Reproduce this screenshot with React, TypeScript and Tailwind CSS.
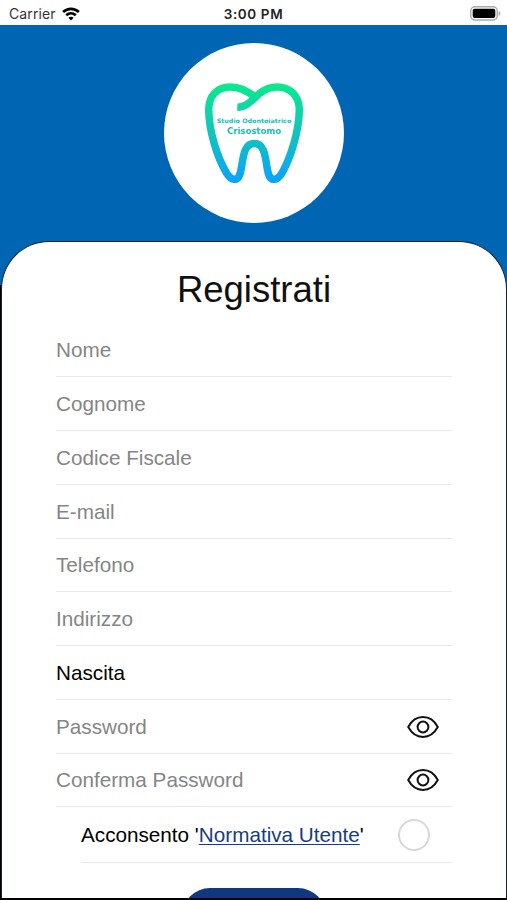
const fields = ["Nome", "Cognome", "Codice Fiscale", "E-mail", "Telefono", "Indirizzo"];

function StatusBar() {
  return (
    <div className="relative flex h-[25px] shrink-0 items-center justify-between bg-white pl-[9px] pr-[6px] pt-[2px] font-['Inter',sans-serif]">
      <div className="flex items-center gap-[6px]">
        <span className="text-[14px] leading-none tracking-[0.1px] text-[#333]">Carrier</span>
        <svg width="18" height="14" viewBox="0 0 18 14" fill="none" stroke="#000" strokeWidth="2.7">
          <path d="M1.1 5.1C5.6.8 12.4.8 16.9 5.1" />
          <path d="M4.2 8.3c2.8-2.6 6.8-2.6 9.6 0" />
          <path d="M9 13.4 6.4 10.8c1.5-1.3 3.7-1.3 5.2 0Z" fill="#000" stroke="none" />
        </svg>
      </div>
      <span className="absolute left-1/2 top-[7px] -translate-x-1/2 whitespace-nowrap text-[13.5px] font-semibold leading-[14px] tracking-[0.6px] text-[#222]">
        3:00 PM
      </span>
      <svg width="31" height="15" viewBox="0 0 31 15">
        <rect x=".8" y=".8" width="26.4" height="13.2" rx="4" fill="#fff" stroke="#aaa" strokeWidth="1.4" />
        <rect x="2.7" y="2.7" width="22.6" height="9.4" rx="2" fill="#000" />
        <path d="M28.6 5c2.4.8 2.4 4 0 4.8Z" fill="#aaa" />
      </svg>
    </div>
  );
}

function Logo() {
  return (
    <svg className="h-[180px] w-[180px] rounded-full bg-white" viewBox="0 0 180 180">
      <defs>
        <linearGradient id="tooth" gradientUnits="userSpaceOnUse" x1="0" y1="40" x2="0" y2="140">
          <stop offset="0" stopColor="#0aeb8c" />
          <stop offset=".5" stopColor="#12c4bc" />
          <stop offset="1" stopColor="#08a2ff" />
        </linearGradient>
      </defs>
      <path
        d="M73.3 64.2C83 64.5 89 56 96 50C101 46 106 43.9 113 43.9C127 43.9 135.4 54 135.3 67C135 88 127 114 118 130C113 138 107 138.5 104.5 131C101 119 102.5 100.5 90.3 100.5C78 100.5 79.5 119 76 131C73.5 138.5 67.5 138 62.5 130C53 114 45 88 44.7 67C44.6 53 53 43.9 66 43.9C76 43.9 82 48 91 53.5"
        fill="none"
        stroke="url(#tooth)"
        strokeWidth="7.5"
      />
      <g fill="#1cbcb5" fontFamily="DejaVu Sans" fontWeight="700" textAnchor="middle">
        <text x="90" y="79.5" fontSize="6" textLength="74.5" lengthAdjust="spacingAndGlyphs">
          Studio Odontoiatrico
        </text>
        <text x="90" y="90.5" fontSize="8.7" textLength="54" lengthAdjust="spacingAndGlyphs">
          Crisostomo
        </text>
      </g>
    </svg>
  );
}

function Eye() {
  return (
    <svg width="32" height="22" viewBox="0 0 32 22" fill="none" stroke="#111" strokeWidth="2">
      <path d="M1.2 11C8.5-2.2 23.5-2.2 30.8 11C23.5 24.2 8.5 24.2 1.2 11Z" strokeLinejoin="round" />
      <circle cx="16" cy="11" r="5.4" />
    </svg>
  );
}

function PasswordRow({ label }: { label: string }) {
  return (
    <div className="flex h-[53.75px] items-center justify-between border-b border-[#e9e9e9] pr-[13px] pt-[1px] text-[#858585]">
      <span>{label}</span>
      <Eye />
    </div>
  );
}

export default function App() {
  return (
    <div className="flex h-[900px] w-[507px] flex-col overflow-hidden bg-black font-['Liberation_Sans',Arial,sans-serif]">
      <StatusBar />

      {/* Header */}
      <div className="flex h-[260px] shrink-0 justify-center bg-[#0065b3] pt-[18px]">
        <Logo />
      </div>

      {/* Registration form */}
      <div className="relative -mt-[44px] mb-[2px] ml-[1px] flex min-h-0 flex-1 flex-col overflow-hidden rounded-t-[48px] border border-b-0 border-[#14232f] bg-white pl-[54px] pr-[54px]">
        <h1 className="mt-[26px] h-[55.5px] shrink-0 text-center text-[36.5px] leading-[44px] text-[#111]">Registrati</h1>

        <div className="text-[20.7px] leading-6">
          {fields.map((field) => (
            <div key={field} className="flex h-[53.75px] items-center border-b border-[#e9e9e9] pt-[1px] text-[#858585]">
              {field}
            </div>
          ))}
          <div className="flex h-[53.75px] items-center border-b border-[#e9e9e9] pt-[1px] text-black">Nascita</div>
          <PasswordRow label="Password" />
          <PasswordRow label="Conferma Password" />

          <div className="ml-[25px] flex h-[55.5px] items-center justify-between border-b border-[#e9e9e9] pr-[22px] pt-[1px] text-black">
            <span>
              Acconsento '<a className="text-[#173b80] underline decoration-1 underline-offset-2">Normativa Utente</a>'
            </span>
            <span className="h-8 w-8 rounded-full border-2 border-[#d8d8d8]" />
          </div>
        </div>

        <button className="mt-[25px] h-[56px] w-[144px] shrink-0 self-center rounded-[28px] bg-[#10387f]" />
      </div>
    </div>
  );
}
